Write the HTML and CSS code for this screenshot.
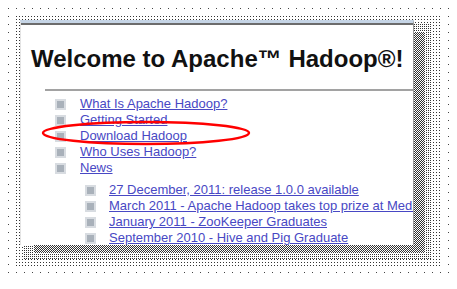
FILE: index.html
```html
<!DOCTYPE html>
<html lang="en">
  <head>
    <meta charset="UTF-8" />
    <title>Welcome to Apache Hadoop</title>
    <link rel="stylesheet" href="styles.css">
  </head>
  <body>
    <div class="stage">
      <div class="shade shade-far"></div>
      <div class="shade shade-sparse"></div>
      <div class="shade shade-mid"></div>
      <div class="shade shade-dense"></div>

      <div class="panel">
        <h1>Welcome to Apache&trade; Hadoop&reg;!</h1>
        <hr class="rule" />
        <ul class="menu">
          <li><a href="#">What Is Apache Hadoop?</a></li>
          <li><a href="#">Getting Started</a></li>
          <li><a href="#">Download Hadoop</a></li>
          <li><a href="#">Who Uses Hadoop?</a></li>
          <li><a href="#">News</a><ul class="menu sub">
              <li><a href="#">27 December, 2011: release 1.0.0 available</a></li>
              <li><a href="#">March 2011 - Apache Hadoop takes top prize at Media Guardian Innovation Awards</a></li>
              <li><a href="#">January 2011 - ZooKeeper Graduates</a></li>
              <li><a href="#">September 2010 - Hive and Pig Graduate</a></li>
            </ul>
          </li>
        </ul>
      </div>

      <!-- hand-drawn annotation round the download link -->
      <svg class="circle" width="212" height="28" viewBox="0 0 212 28">
        <ellipse cx="106" cy="14" rx="103" ry="11" fill="none" stroke="#f00" stroke-width="2.4" />
      </svg>
    </div>
  </body>
</html>
```

FILE: styles.css
```css
* {
  margin: 0;
  padding: 0;
  box-sizing: border-box;
}

html,
body {
  min-height: 289px;
}

body {
  background: #fff;
  font-family: "Liberation Sans", Arial, sans-serif;
  padding-top: 20px;
}

.stage {
  position: relative;
  width: 394px;
  height: 225px;
  margin-left: 20px;
}

/* dithered drop shadow, densest band on top */
.shade {
  position: absolute;
}

.shade-far {
  top: -12px;
  left: -12px;
  right: -38px;
  bottom: -28px;
  background: conic-gradient(from 270deg at 1px 1px, #444 25%, transparent 0) 0 0 / 8px 8px, #fff;
}

.shade-sparse {
  top: -4px;
  left: -4px;
  right: -27px;
  bottom: -21px;
  background: conic-gradient(from 270deg at 1px 1px, #333 25%, transparent 0) 0 0 / 3px 3px, #fff;
}

.shade-mid {
  top: 4px;
  left: 4px;
  right: -18px;
  bottom: -14px;
  background: conic-gradient(from 270deg at 1px 1px, #333 25%, transparent 0) 0 0 / 2px 2px, #fff;
}

.shade-dense {
  top: 12px;
  left: 14px;
  right: -11px;
  bottom: -8px;
  background: repeating-conic-gradient(#333 0 25%, #fff 0 50%) 0 0 / 2px 2px;
}

.panel {
  position: relative;
  height: 100%;
  overflow: hidden;
  background: #fff;
  border-top: 3px solid #c6d5e6;
  border-left: 1px solid #e4e4e4;
  border-right: 1px solid #9a9a9a;
  box-shadow: inset 0 2px 0 #6c6c6c;
  white-space: nowrap;
}

.panel h1 {
  margin: 22px 0 0 10px;
  font-size: 24px;
  line-height: 28px;
  font-weight: bold;
  color: #111;
}

.rule {
  margin: 16px 0 0 24px;
  border: none;
  border-top: 2px solid #a2a2a2;
}

.menu {
  list-style: none;
  margin: 5px 0 0 34px;
  font-size: 13px;
  line-height: 16px;
}

.menu.sub {
  margin: 6px 0 0 30px;
}

.menu li::before {
  content: "";
  display: inline-block;
  width: 7px;
  height: 7px;
  margin-right: 14px;
  vertical-align: middle;
  background: #a9b1ba;
  border: 2px solid #d8dce1;
}

.menu.sub li::before {
  margin-right: 13px;
}

.menu a {
  color: #4848c4;
  text-decoration: underline;
}

.circle {
  position: absolute;
  left: 20px;
  top: 99px;
}
```
